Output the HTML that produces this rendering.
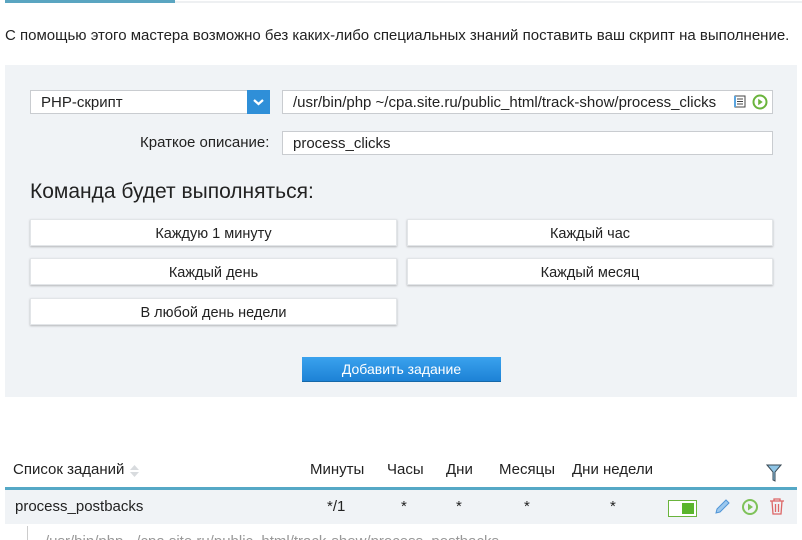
<!DOCTYPE html><html><head><meta charset="utf-8"><style>
body{margin:0;width:802px;height:540px;overflow:hidden;background:#fff;font-family:"Liberation Sans",sans-serif;color:#222;position:relative}
.a{position:absolute}
.btn{position:absolute;background:#fff;border:1px solid #e2e5e8;box-shadow:0 1px 2px rgba(0,0,0,.25);text-align:center;font-size:14.5px;line-height:28px;height:27px;box-sizing:border-box}
.inp{position:absolute;background:#fff;border:1px solid #c9ccd0;height:24px;line-height:24px;font-size:15px;box-sizing:border-box;padding-left:10px;white-space:nowrap;overflow:hidden}
.th{position:absolute;top:461px;font-size:15px}
.td{position:absolute;top:498px;font-size:15px}
</style></head><body>
<div class="a" style="left:5px;top:0;width:170px;height:3px;background:#5aa5c1"></div>
<div class="a" style="left:175px;top:1px;width:627px;height:2px;background:#eef0f2"></div>
<div class="a" style="left:5px;top:27px;font-size:15px;white-space:nowrap">С помощью этого мастера возможно без каких-либо специальных знаний поставить ваш скрипт на выполнение.</div>
<div class="a" style="left:5px;top:65px;width:792px;height:332px;background:#f0f3f6"></div>
<div class="inp" style="left:30px;top:90px;width:240px">PHP-скрипт</div>
<div class="a" style="left:247px;top:90px;width:23px;height:24px;background:#2f8fd8"><svg width="23" height="24"><path d="M7 10l4.5 4 4.5-4" stroke="#fff" stroke-width="2.2" fill="none"/></svg></div>
<div class="inp" style="left:282px;top:90px;width:491px;padding-right:40px">/usr/bin/php ~/cpa.site.ru/public_html/track-show/process_clicks</div>
<div class="a" style="left:734px;top:95px;width:12px;height:13px;background:#fff"><svg width="12" height="13"><rect x="1" y="1" width="10" height="11" fill="none" stroke="#444"/><path d="M3 4h6M3 6.5h6M3 9h6" stroke="#444"/><rect x="0" y="1" width="2" height="11" fill="#5aa5e0"/></svg></div>
<svg class="a" style="left:752px;top:94px" width="16" height="16"><circle cx="8" cy="8" r="6.5" fill="none" stroke="#6ab43c" stroke-width="2"/><path d="M6.2 4.8l4.5 3.2-4.5 3.2z" fill="#6ab43c"/></svg>
<div class="a" style="left:140px;top:134px;font-size:15px">Краткое описание:</div>
<div class="inp" style="left:282px;top:131px;width:491px">process_clicks</div>
<div class="a" style="left:30px;top:180px;font-size:21px">Команда будет выполняться:</div>
<div class="btn" style="left:30px;top:219px;width:367px">Каждую 1 минуту</div>
<div class="btn" style="left:407px;top:219px;width:366px">Каждый час</div>
<div class="btn" style="left:30px;top:258px;width:367px">Каждый день</div>
<div class="btn" style="left:407px;top:258px;width:366px">Каждый месяц</div>
<div class="btn" style="left:30px;top:298px;width:367px">В любой день недели</div>
<div class="a" style="left:302px;top:357px;width:199px;height:24px;background:linear-gradient(#3aa2ee,#1d82d6);border-bottom:1px solid #1668a8;color:#fff;text-align:center;line-height:25px;font-size:14px">Добавить задание</div>
<div class="th" style="left:13px">Список заданий</div>
<svg class="a" style="left:129px;top:463px" width="11" height="16"><path d="M1 7l4.5-5 4.5 5z M1 9l4.5 5 4.5-5z" fill="#d8dbde"/></svg>
<div class="th" style="left:310px">Минуты</div>
<div class="th" style="left:387px">Часы</div>
<div class="th" style="left:446px">Дни</div>
<div class="th" style="left:499px">Месяцы</div>
<div class="th" style="left:572px">Дни недели</div>
<svg class="a" style="left:766px;top:463px" width="16" height="20"><path d="M1 2h14l-6 7v9l-2-1V9z" fill="#8fc5e6" stroke="#3a4a55" stroke-width="1"/></svg>
<div class="a" style="left:5px;top:487px;width:792px;height:3px;background:#55a8c6"></div>
<div class="a" style="left:5px;top:490px;width:792px;height:34px;background:#f0f3f6"></div>
<div class="td" style="left:15px">process_postbacks</div>
<div class="td" style="left:327px">*/1</div>
<div class="td" style="left:401px">*</div>
<div class="td" style="left:456px">*</div>
<div class="td" style="left:524px">*</div>
<div class="td" style="left:610px">*</div>
<div class="a" style="left:668px;top:500px;width:27px;height:15px;border:1px solid #6ab43c;background:#fff"><div style="position:absolute;right:2px;top:2px;width:12px;height:11px;background:#5ab52c"></div></div>
<svg class="a" style="left:713px;top:498px" width="18" height="18"><path d="M3 15l1-4 9-9 3 3-9 9z" fill="#9cc8ee" stroke="#4f94d6"/></svg>
<svg class="a" style="left:741px;top:498px" width="18" height="18"><circle cx="9" cy="9" r="7" fill="none" stroke="#7fc25a" stroke-width="2"/><path d="M7 5.5l5 3.5-5 3.5z" fill="#7fc25a"/></svg>
<svg class="a" style="left:768px;top:497px" width="18" height="20"><path d="M2 4h14M6 4V2h6v2M4 4l1 13h8l1-13M7.5 7v8M10.5 7v8" fill="none" stroke="#d66" stroke-width="1.3"/></svg>
<div class="a" style="left:27px;top:526px;width:1px;height:14px;background:#ccc"></div>
<div class="a" style="left:45px;top:533px;font-size:15px;color:#999;white-space:nowrap;height:7px;overflow:hidden;line-height:17px">/usr/bin/php ~/cpa.site.ru/public_html/track-show/process_postbacks</div>
</body></html>
